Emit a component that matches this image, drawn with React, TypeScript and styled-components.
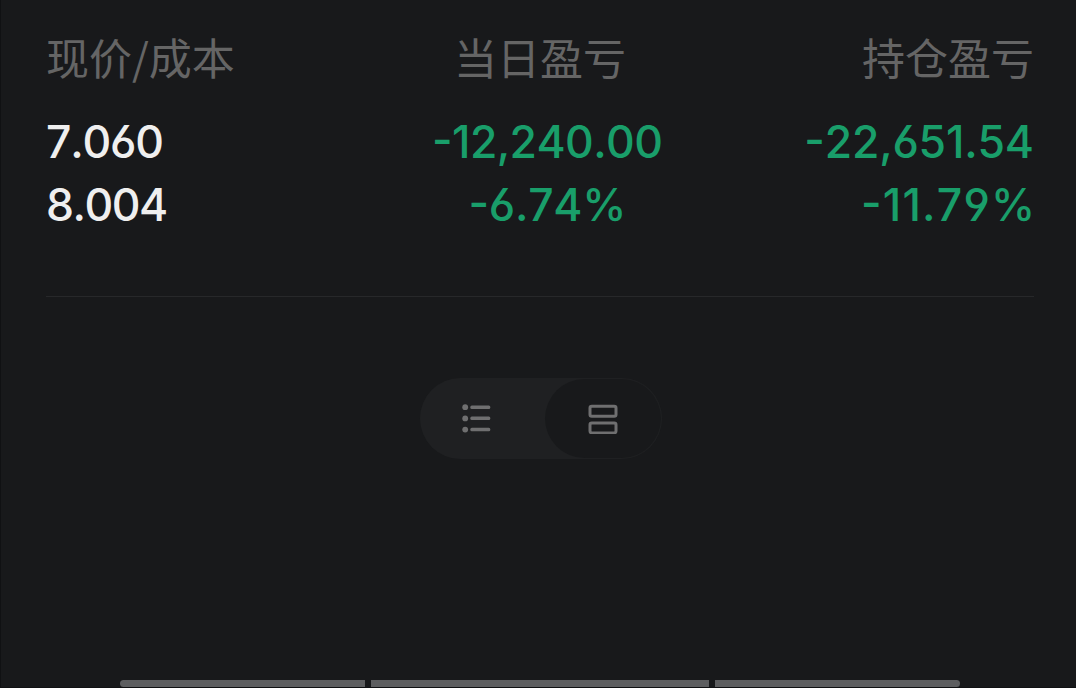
import * as React from 'react';
import styled, { createGlobalStyle } from 'styled-components';

const theme = {
  background: '#18191b',
  edge: '#101113',
  label: '#656565',
  white: '#efefef',
  green: '#199e6a',
  divider: '#27282a',
  track: '#1f2022',
  bar: '#5d5e60',
};

const GlobalStyle = createGlobalStyle`
  * {
    box-sizing: border-box;
  }

  body {
    margin: 0;
    background: ${theme.background};
  }
`;

const Screen = styled('main')`
  display: flex;
  flex-direction: column;
  width: 1076px;
  height: 688px;
  overflow: hidden;
  border-left: 1px solid ${theme.edge};
  border-bottom: 1px solid ${theme.edge};
  background: ${theme.background};
`;

const Holdings = styled('section')`
  display: grid;
  grid-template-columns: repeat(3, 1fr);
  height: 297px;
  margin: 0 42px 0 45px;
  padding-top: 25px;
  border-bottom: 1px solid ${theme.divider};
`;

const Column = styled('div')<{ $align: string }>`
  display: flex;
  flex-direction: column;
  align-items: ${({ $align }) => $align};
`;

const Label = styled('div')`
  height: 85px;
  color: ${theme.label};
  font-family: "Noto Sans CJK SC", sans-serif;
  font-size: 43px;
  line-height: 62px;
  white-space: nowrap;
`;

const Value = styled('div')<{ $color: string; $spacing: number; $indent: number }>`
  height: 63px;
  margin-right: ${({ $spacing }) => ($spacing > 0 ? -2 * $spacing : -$spacing)}px;
  padding-left: ${({ $indent }) => $indent}px;
  color: ${({ $color }) => $color};
  font-family: Inter, sans-serif;
  font-size: 44.5px;
  font-weight: 500;
  font-feature-settings: "cv03", "cv04", "case";
  font-kerning: none;
  letter-spacing: ${({ $spacing }) => $spacing}px;
  line-height: 65px;
  white-space: nowrap;
`;

const Toggle = styled('div')`
  display: flex;
  align-self: center;
  width: 242px;
  height: 81px;
  margin: 81px 0 0 4px;
  padding: 1px;
  border-radius: 41px;
  background: ${theme.track};
`;

const Option = styled('button')<{ $active?: boolean }>`
  display: flex;
  align-items: center;
  justify-content: center;
  width: ${({ $active }) => ($active ? 116 : 124)}px;
  height: 79px;
  padding: 0 ${({ $active }) => ($active ? 0 : 12)}px 0 0;
  border: none;
  border-radius: 40px;
  background: ${({ $active }) => ($active ? theme.background : 'transparent')};
`;

const Segments = styled('div')`
  display: grid;
  grid-template-columns: 245px 338px 245px;
  gap: 6px;
  margin: auto 0 0 119px;
`;

const Segment = styled('div')`
  height: 7px;
  background: ${theme.bar};

  &:first-child {
    border-radius: 4px 0 0 4px;
  }

  &:last-child {
    border-radius: 0 4px 4px 0;
  }
`;

const ListIcon = () => (
  <svg width="30" height="30" viewBox="0 0 30 30" fill="#6f6f70">
    {[3.2, 14.4, 25.6].map((y) => (
      <g key={y}>
        <circle cx="3.2" cy={y} r="2.9" />
        <rect x="8.3" y={y - 1.8} width="20" height="3.5" rx="1.5" />
      </g>
    ))}
  </svg>
);

const CardsIcon = () => (
  <svg width="30" height="30" viewBox="0 0 30 30" fill="none" stroke="#6f6f70" strokeWidth="3">
    <rect x="2" y="2.3" width="26" height="10" rx="1.8" />
    <rect x="2" y="18.9" width="26" height="10" rx="1.8" />
  </svg>
);

type ColumnData = {
  label: string;
  align: string;
  color: string;
  indent: number;
  values: [string, number][];
};

const columns: ColumnData[] = [
  { label: '现价/成本', align: 'flex-start', color: theme.white, indent: 0, values: [['7.060', -1.2], ['8.004', -1.5]] },
  { label: '当日盈亏', align: 'center', color: theme.green, indent: 15, values: [['-12,240.00', -0.6], ['-6.74%', -0.3]] },
  { label: '持仓盈亏', align: 'flex-end', color: theme.green, indent: 0, values: [['-22,651.54', -0.2], ['-11.79%', 1.2]] },
];

const App = () => (
  <>
    <GlobalStyle />
    <Screen>
      <Holdings>
        {columns.map(({ label, align, color, indent, values }) => (
          <Column key={label} $align={align}>
            <Label>{label}</Label>
            {values.map(([value, spacing]) => (
              <Value key={value} $color={color} $spacing={spacing} $indent={indent}>{value}</Value>
            ))}
          </Column>
        ))}
      </Holdings>
      <Toggle>
        <Option type="button" aria-label="List view"><ListIcon /></Option>
        <Option type="button" aria-label="Card view" $active><CardsIcon /></Option>
      </Toggle>
      <Segments>
        <Segment />
        <Segment />
        <Segment />
      </Segments>
    </Screen>
  </>
);

export default App;
